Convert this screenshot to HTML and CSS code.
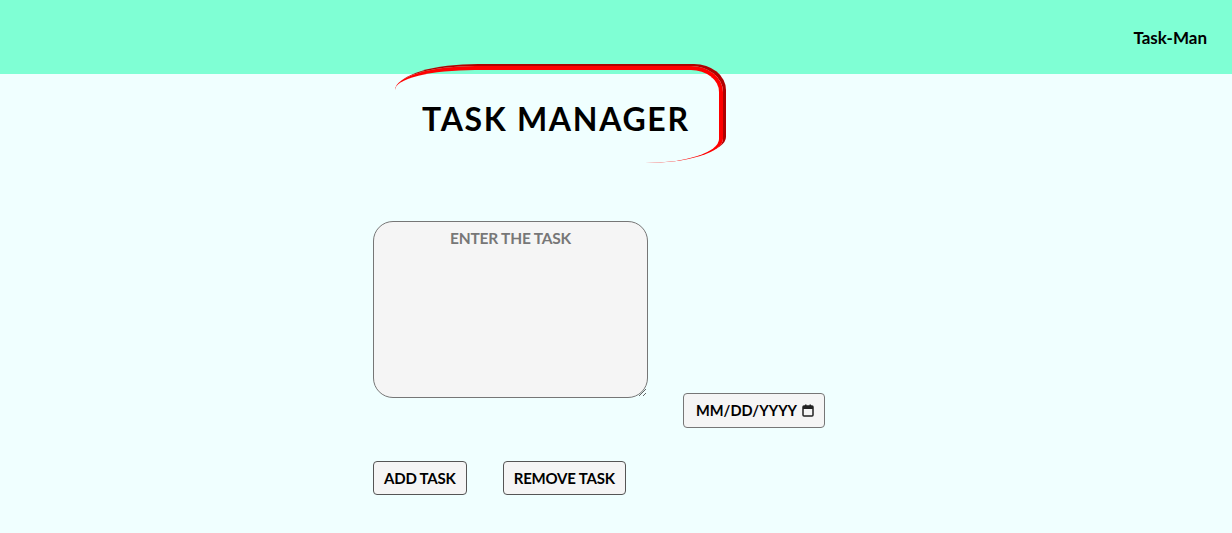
FILE: index.html
```html
<!DOCTYPE html>
<html>
<head>
<meta charset="utf-8">
<link rel="stylesheet" href="styles.css">
</head>
<body>
<header class="topbar">
  <span class="brand">Task-Man</span>
</header>
<main class="main">
  <h1 class="title">TASK MANAGER</h1>
  <div class="form-row">
    <textarea class="task-input" placeholder="ENTER THE TASK"></textarea>
    <label class="date-input">
      <span class="date-text">MM/DD/YYYY</span>
      <svg class="cal-icon" width="12" height="13" viewBox="0 0 12 13"><rect x="1" y="2" width="10" height="10" rx="1" fill="none" stroke="#222" stroke-width="1.5"/><rect x="1" y="2" width="10" height="3" fill="#222"/><rect x="3" y="0.5" width="1.5" height="2.5" fill="#222"/><rect x="7.5" y="0.5" width="1.5" height="2.5" fill="#222"/></svg>
    </label>
  </div>
  <div class="buttons">
    <button class="btn">ADD TASK</button>
    <button class="btn">REMOVE TASK</button>
  </div>
</main>
</body>
</html>
```
FILE: styles.css
```css
* { box-sizing: border-box; }
html, body { margin: 0; padding: 0; }
body {
  background: #f0ffff;
  font-family: Lato, "Open Sans", sans-serif;
  font-weight: 700;
  width: 1232px;
  height: 533px;
  overflow: hidden;
}
.topbar {
  height: 74px;
  background: #7fffd4;
  display: flex;
  align-items: center;
  justify-content: flex-end;
  padding-right: 25px;
}
.brand {
  font-size: 17px;
  font-weight: 700;
  color: #000;
}
.main {
  padding-left: 373px;
  display: flex;
  flex-direction: column;
}
.title {
  margin: -8px 0 0 22px;
  width: 328px;
  height: 97px;
  font-size: 32px;
  letter-spacing: 1.7px;
  font-weight: 700;
  color: #000;
  display: flex;
  align-items: center;
  padding-left: 27px;
  padding-top: 4px;
  border-top: 4px solid #ff0000;
  border-right: 4px solid #ff0000;
  border-radius: 80px 32px 78px 0 / 24px 26px 24px 0;
  box-shadow: 3px -2px 0 0 #b00000;
}
.form-row {
  display: flex;
  align-items: flex-start;
  margin-top: 58px;
}
.task-input {
  width: 275px;
  height: 177px;
  border: 1px solid #767676;
  border-radius: 20px;
  background: #f5f5f5;
  font-family: Lato, sans-serif;
  font-weight: 700;
  font-size: 15.5px;
  letter-spacing: -0.2px;
  text-align: center;
  padding: 7px 8px;
  resize: both;
}
.task-input::placeholder {
  color: #777;
}
.date-input {
  margin-left: 35px;
  margin-top: 172px;
  width: 142px;
  height: 35px;
  border: 1px solid #767676;
  border-radius: 4px;
  background: #f5f5f5;
  display: flex;
  align-items: center;
  padding-left: 12px;
  gap: 5px;
  font-size: 14.6px;
  color: #000;
}
.cal-icon { display: block; }
.buttons {
  display: flex;
  gap: 36px;
  margin-top: 33px;
}
.btn {
  height: 34px;
  padding: 0 10px;
  border: 1px solid #555;
  border-radius: 4px;
  background: #f5f5f5;
  font-family: Lato, sans-serif;
  font-weight: 700;
  font-size: 15px;
  letter-spacing: -0.2px;
  color: #000;
}
```
